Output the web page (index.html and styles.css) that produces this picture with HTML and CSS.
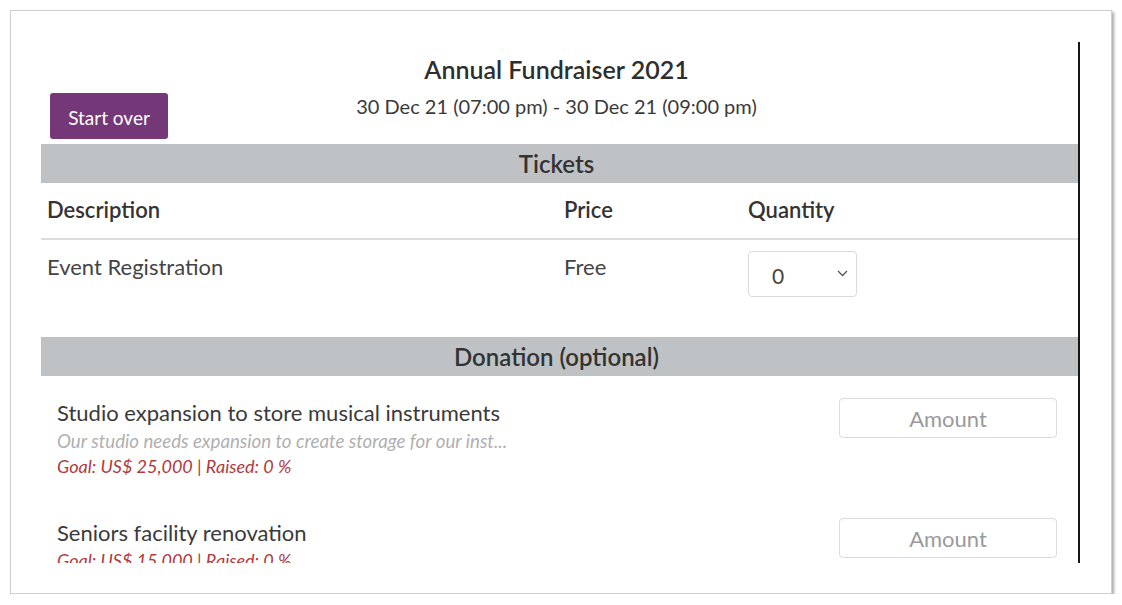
FILE: index.html
```html
<!DOCTYPE html>
<html lang="en">
<head>
<meta charset="utf-8">
<title>Annual Fundraiser 2021</title>
<link rel="stylesheet" href="styles.css">
</head>
<body>
<div class="frame">
  <div class="viewport">
    <header class="event-head">
      <button class="btn-start" type="button">Start over</button>
      <div class="event-info">
        <h1 class="event-title">Annual Fundraiser 2021</h1>
        <div class="event-date">30 Dec 21 (07:00 pm) - 30 Dec 21 (09:00 pm)</div>
      </div>
      <div class="spacer"></div>
    </header>

    <section class="section">
      <div class="band">Tickets</div>
      <div class="tickets">
        <div class="t-row t-head">
          <div class="c-desc">Description</div>
          <div class="c-price">Price</div>
          <div class="c-qty">Quantity</div>
        </div>
        <div class="t-row t-body">
          <div class="c-desc">Event Registration</div>
          <div class="c-price">Free</div>
          <div class="c-qty">
            <div class="select">
              <span class="select-val">0</span>
              <svg class="chev" width="11" height="7" viewBox="0 0 11 7"><path d="M1 1l4.5 4.5L10 1" fill="none" stroke="#555" stroke-width="1.3"/></svg>
            </div>
          </div>
        </div>
      </div>
    </section>

    <section class="section">
      <div class="band">Donation (optional)</div>
      <div class="don-list">
        <div class="don-item">
          <div class="don-text">
            <div class="don-title">Studio expansion to store musical instruments</div>
            <div class="don-desc">Our studio needs expansion to create storage for our inst...</div>
            <div class="don-goal">Goal: US$ 25,000 | Raised: 0 %</div>
          </div>
          <div class="amount">Amount</div>
        </div>
        <div class="don-item">
          <div class="don-text">
            <div class="don-title">Seniors facility renovation</div>
            <div class="don-goal">Goal: US$ 15,000 | Raised: 0 %</div>
          </div>
          <div class="amount">Amount</div>
        </div>
      </div>
    </section>
  </div>
</div>
</body>
</html>
```

FILE: styles.css
```css
* { box-sizing: border-box; }
html, body { margin: 0; padding: 0; background: #fff; }
body {
  font-family: Lato, "Open Sans", "Liberation Sans", sans-serif;
  color: #444;
  padding: 10px 0 0 10px;
}
.frame {
  width: 1102px;
  height: 584px;
  border: 1px solid #cfcfcf;
  box-shadow: 2px 2px 3px rgba(0,0,0,0.35);
  background: #fff;
  padding: 31px 0 0 30px;
}
.viewport {
  width: 1039px;
  height: 521px;
  overflow: hidden;
  border-right: 2px solid #161616;
}
.event-head {
  display: grid;
  grid-template-columns: 1fr auto 1fr;
  align-items: end;
  height: 102px;
  padding: 0 15px 5px 9px;
}
.btn-start {
  justify-self: start;
  width: 118px;
  height: 46px;
  background: #743878;
  color: #fff;
  border: none;
  border-radius: 3px;
  font-family: inherit;
  font-size: 19px;
  padding: 2px 0 0;
}
.event-info {
  text-align: center;
  align-self: start;
  padding-top: 11px;
}
.event-title {
  margin: 0;
  font-size: 25px;
  font-weight: 600;
  color: #2e2e2e;
  line-height: 32px;
}
.event-date {
  font-size: 20px;
  color: #3a3a3a;
  line-height: 26px;
  margin-top: 8px;
}
.band {
  background: #bfc2c4;
  height: 39px;
  line-height: 39px;
  text-align: center;
  font-size: 24px;
  font-weight: 600;
  color: #333;
  padding-right: 6px;
}
.t-row {
  display: grid;
  grid-template-columns: 517px 184px 1fr;
}
.t-row > div { padding-left: 6px; }
.t-head {
  font-weight: 600;
  font-size: 22px;
  color: #333;
  height: 57px;
  align-items: center;
  border-bottom: 2px solid #dcdcdc;
  padding-bottom: 3px;
}
.t-body {
  font-size: 22px;
  color: #444;
  padding-top: 13px;
  height: 97px;
}
.select {
  width: 109px;
  height: 46px;
  border: 1px solid #d9d9d9;
  border-radius: 4px;
  display: flex;
  align-items: center;
  justify-content: space-between;
  padding: 3px 8px 0 23px;
  font-size: 21px;
  color: #444;
  margin-top: -2px;
}
.chev { margin-top: -4px; }
.don-list { padding: 0 21px 0 16px; }
.don-item {
  display: flex;
  justify-content: space-between;
  align-items: flex-start;
  height: 120px;
  padding-top: 22px;
}
.don-title {
  font-size: 22px;
  color: #3a3a3a;
  line-height: 30px;
}
.don-desc {
  font-size: 18.7px;
  font-style: italic;
  color: #b0b0b0;
  line-height: 26px;
}
.don-goal {
  font-size: 18px;
  font-style: italic;
  color: #b03a3d;
  line-height: 24px;
}
.amount {
  width: 218px;
  height: 40px;
  border: 1px solid #dcdcdc;
  border-radius: 4px;
  text-align: center;
  line-height: 40px;
  font-size: 22px;
  color: #9a9a9a;
}
```
